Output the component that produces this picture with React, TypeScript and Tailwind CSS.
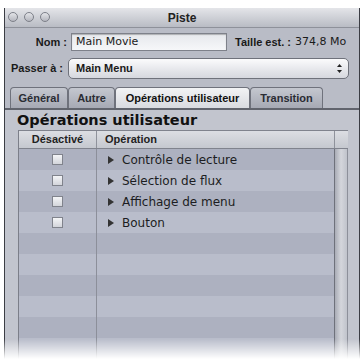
import React from 'react'

const font = { fontFamily: '"DejaVu Sans", "Liberation Sans", sans-serif' }
const boldFont = { fontFamily: '"Liberation Sans", Arial, sans-serif' }

const rows = ['Contrôle de lecture', 'Sélection de flux', 'Affichage de menu', 'Bouton', '', '', '', '', '', '']

function Light() {
  return (
    <span className="h-[10px] w-[10px] rounded-full border border-[#7d8089] bg-gradient-to-b from-[#e3e4e8] to-[#b5b7bf]" />
  )
}

function Tab({ label, active, w }: { label: string; active?: boolean; w: string }) {
  return (
    <div
      style={boldFont}
      className={`${w} flex h-[21px] items-center justify-center whitespace-nowrap rounded-t-[4px] border border-b-0 border-[#6f727c] text-[11px] font-bold ${
        active
          ? 'bg-gradient-to-b from-[#f2f3f5] to-[#d9dbe0] text-[#111]'
          : 'bg-gradient-to-b from-[#c4c7cf] to-[#a6a9b4] text-[#2a2c33]'
      }`}
    >
      {label}
    </div>
  )
}

export default function App() {
  return (
    <div className="relative h-[359px] w-[362px] overflow-hidden bg-white" style={font}>
      <div className="ml-[4px] mt-[8px] flex h-[351px] w-[356px] flex-col border-l border-r border-[#3b3d44] bg-[#b9bcc6]">
        {/* title bar */}
        <div className="relative flex h-[20px] items-center justify-center border-b border-[#8e919a] bg-gradient-to-b from-[#e4e5e9] to-[#b9bcc4]">
          <div className="absolute left-[3px] top-[4px] flex gap-[6px]">
            <Light />
            <Light />
            <Light />
          </div>
          <span style={boldFont} className="text-[12px] font-bold text-[#222]">Piste</span>
        </div>

        {/* Nom row */}
        <div className="mt-[5px] flex h-[18px] items-center text-[11px] text-[#1a1a1a]">
          <span style={boldFont} className="w-[62px] text-right font-bold">Nom :</span>
          <div className="ml-[4px] flex h-[18px] w-[156px] items-center border border-[#7e818a] bg-gradient-to-b from-[#e6e8ec] to-[#f6f7f9] pl-[4px] shadow-[inset_0_1px_1px_rgba(0,0,0,0.25)]">
            Main Movie
          </div>
          <span style={boldFont} className="ml-[8px] font-bold">Taille est. :</span>
          <span className="ml-[4px]">374,8 Mo</span>
        </div>

        {/* Passer row */}
        <div className="mt-[7px] flex h-[21px] items-center text-[11px] text-[#1a1a1a]">
          <span style={boldFont} className="w-[58px] whitespace-nowrap text-right font-bold">Passer à :</span>
          <div
            style={boldFont}
            className="ml-[5px] flex h-[21px] w-[281px] items-center justify-between rounded-[5px] border border-[#6f727b] bg-gradient-to-b from-[#fbfbfc] via-[#e8e9ed] to-[#d6d8de] pl-[7px] pr-[5px] font-bold"
          >
            <span>Main Menu</span>
            <svg width="7" height="11" viewBox="0 0 7 11">
              <path d="M3.5 1 L6 4 L1 4 Z" fill="#222" />
              <path d="M3.5 10 L6 7 L1 7 Z" fill="#222" />
            </svg>
          </div>
        </div>

        {/* tabs */}
        <div className="mt-[8px] flex pl-[5px]">
          <Tab label="Général" w="w-[58px]" />
          <Tab label="Autre" w="w-[47px]" />
          <Tab label="Opérations utilisateur" w="w-[135px]" active />
          <Tab label="Transition" w="w-[73px]" />
        </div>

        {/* panel */}
        <div className="flex flex-1 flex-col border-t-2 border-[#61646d] bg-[#c2c5ce]">
          <div className="mb-[1px] mt-[2px] pl-[12px] text-[14.5px] font-bold leading-[17px] text-[#111]">
            Opérations utilisateur
          </div>
          <div className="ml-[13px] flex w-[330px] flex-1 flex-col border-l border-[#7c7f89]">
            {/* header */}
            <div
              style={boldFont}
              className="flex h-[19px] border-y border-[#80838d] bg-gradient-to-b from-[#dcdee3] to-[#c5c8cf] text-[11px] font-bold text-[#222]"
            >
              <div className="flex w-[78px] items-center justify-center border-r border-[#8f929b]">Désactivé</div>
              <div className="flex w-[238px] items-center border-r border-[#8f929b] pl-[8px]">Opération</div>
              <div className="flex-1" />
            </div>
            {/* body */}
            <div className="flex flex-1">
              <div className="flex w-[316px] flex-col border-r border-[#6e717b]">
                {rows.map((r, i) => (
                  <div
                    key={i}
                    className={`flex h-[21px] shrink-0 text-[12px] text-[#1c1d22] ${
                      i % 2 === 0 ? 'bg-[#adb1c0]' : 'bg-[#b9bdcb]'
                    }`}
                  >
                    <div className="flex w-[78px] items-center justify-center border-r border-[#8c8f9a]">
                      {r && (
                        <span className="h-[11px] w-[11px] border border-[#80838c] bg-gradient-to-b from-[#f4f5f7] to-[#d3d5db]" />
                      )}
                    </div>
                    {r && (
                      <div className="flex items-center pl-[11px]">
                        <svg width="6" height="8" viewBox="0 0 6 8">
                          <path d="M0 0 L6 4 L0 8 Z" fill="#333" />
                        </svg>
                        <span className="ml-[8px]">{r}</span>
                      </div>
                    )}
                  </div>
                ))}
              </div>
              <div className="flex-1 border-r border-[#8d909a] bg-gradient-to-r from-[#a9acb6] via-[#d4d6dc] to-[#c0c3cb]" />
            </div>
          </div>
        </div>
      </div>
      <div className="pointer-events-none absolute bottom-0 left-0 h-[20px] w-full bg-gradient-to-b from-transparent to-white" />
    </div>
  )
}
